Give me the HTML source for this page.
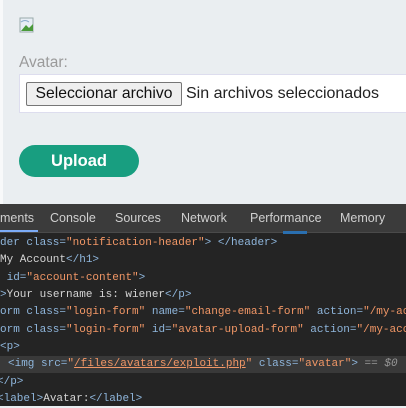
<!DOCTYPE html>
<html><head><style>
body{margin:0;width:406px;height:406px;overflow:hidden;background:#eaeef1;font-family:"Liberation Sans",sans-serif;position:relative}
.edge{position:absolute;left:0;top:0;width:3px;height:204px;background:#f8f9fa}
.abs{position:absolute}
.dt{position:absolute;left:0;top:204px;width:406px;height:202px;background:#242424}
.tabs{position:absolute;left:0;top:0;width:406px;height:28px;background:#3b3b3b;border-bottom:1px solid #4a4a4a;font-size:12.5px;color:#d0d0d0}
.tabs span{position:absolute;top:7px}
.code{position:absolute;left:0;top:30px;width:406px;font-family:"Liberation Mono",monospace;font-size:11px;color:#d5d5d5}
.l{position:absolute;height:17px;line-height:17px;white-space:pre;left:0}
.t{color:#8fb6dc}.v{color:#f29766}
</style></head><body>
<div class="edge"></div>
<svg class="abs" style="left:19px;top:17px" width="16" height="16"><rect x="1" y="1" width="13" height="14" fill="#e8eef5" stroke="#9aa" stroke-width="1"/><path d="M2 14 L7 8 L10 11 L14 7 L14 14Z" fill="#4a9a3a"/><path d="M2 5 Q6 2 10 5" stroke="#8ac" fill="none"/></svg>
<div class="abs" style="left:19px;top:54px;font-size:15.5px;color:#9a9a9a">Avatar:</div>
<div class="abs" style="left:19px;top:74px;width:390px;height:37px;background:#fff;border:1px solid #dde"></div>
<div class="abs" style="left:26px;top:82px;width:154px;height:22px;background:#efefef;border:1px solid #767676;border-radius:2px;font-size:15.7px;line-height:22px;text-align:center;color:#111">Seleccionar archivo</div>
<div class="abs" style="left:186px;top:82px;font-size:16px;line-height:24px;color:#222">Sin archivos seleccionados</div>
<div class="abs" style="left:19px;top:145px;width:120px;height:32px;border-radius:16px;background:#189e80;color:#fff;font-weight:bold;font-size:16.5px;line-height:32px;text-align:center">Upload</div>
<div class="dt">
<div class="tabs">
<span style="left:0">ments</span><div class="abs" style="left:0;top:26px;width:38px;height:2px;background:#7cacf8"></div>
<span style="left:50px">Console</span><span style="left:115px">Sources</span><span style="left:181px">Network</span><span style="left:250px">Performance</span><span style="left:340px">Memory</span>
<div class="abs" style="left:283px;top:27px;width:24px;height:3px;background:#2a6fb0"></div>
</div>
<div class="code">
<div class="l" style="top:1px"><span class="t">der class=</span><span class="v">"notification-header"</span><span class="t">&gt; &lt;/header&gt;</span></div>
<div class="l" style="top:18px">My Account<span class="t">&lt;/h1&gt;</span></div>
<div class="l" style="top:36px"> <span class="t">id=</span><span class="v">"account-content"</span><span class="t">&gt;</span></div>
<div class="l" style="top:53px"><span class="t">&gt;</span>Your username is: wiener<span class="t">&lt;/p&gt;</span></div>
<div class="l" style="top:70px"><span class="t">orm class=</span><span class="v">"login-form"</span> <span class="t">name=</span><span class="v">"change-email-form"</span> <span class="t">action=</span><span class="v">"/my-ac</span></div>
<div class="l" style="top:88px"><span class="t">orm class=</span><span class="v">"login-form"</span> <span class="t">id=</span><span class="v">"avatar-upload-form"</span> <span class="t">action=</span><span class="v">"/my-acc</span></div>
<div class="l" style="top:105px"><span class="t">&lt;p&gt;</span></div>
<div class="l" style="top:122px;width:406px;background:#393939;padding-left:8px;box-sizing:border-box"><span class="t">&lt;img src=</span><span class="v">"<u>/files/avatars/exploit.php</u>"</span> <span class="t">class=</span><span class="v">"avatar"</span><span class="t">&gt;</span> <span style="color:#999">== <i>$0</i></span></div>
<div class="l" style="top:140px;left:-3px"><span class="t">&lt;/p&gt;</span></div>
<div class="l" style="top:157px;left:-3px"><span class="t">&lt;label&gt;</span>Avatar:<span class="t">&lt;/label&gt;</span></div>
</div>
</div>
</body></html>
